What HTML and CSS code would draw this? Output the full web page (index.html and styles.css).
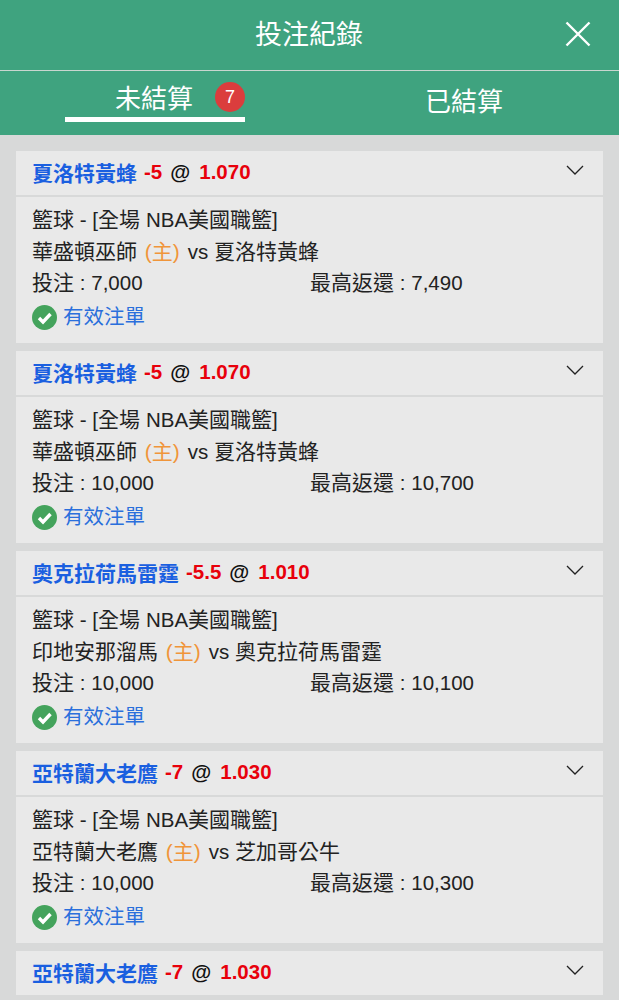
FILE: index.html
```html
<!DOCTYPE html>
<html lang="zh-Hant">
<head>
  <meta charset="UTF-8">
  <meta name="viewport" content="width=device-width, initial-scale=1.0">
  <title>投注紀錄</title>
  <link rel="stylesheet" href="styles.css">
</head>
<body>
  <div class="top-bar">
    <h1>投注紀錄</h1>
    <svg class="close-icon" width="26" height="26" viewBox="0 0 26 26"><path d="M1.5 1.5 L24.5 24.5 M24.5 1.5 L1.5 24.5" stroke="#fff" stroke-width="2.4" fill="none"/></svg>
  </div>
  <div class="tabs">
    <div class="tab active">
      <span class="tab-label">未結算</span>
      <span class="badge">7</span>
    </div>
    <div class="tab other"><span class="tab-label">已結算</span></div>
  </div>

  <div class="list">
    <div class="bet">
      <div class="bet-head">
        <div class="pick"><span class="team">夏洛特黃蜂</span><span class="line">-5</span><span class="at">@</span><span class="odds">1.070</span></div>
        <svg class="chevron" width="18" height="10" viewBox="0 0 18 10"><path d="M1 1 L9 9 L17 1" stroke="#222" stroke-width="1.3" fill="none"/></svg>
      </div>
      <div class="bet-body">
        <div class="row">籃球 <span class="latin">- [</span>全場 <span class="latin">NBA</span>美國職籃<span class="latin">]</span></div>
        <div class="row">華盛頓巫師 <span class="home">(主)</span> <span class="latin">vs</span> 夏洛特黃蜂</div>
        <div class="row amounts"><span class="stake">投注 <span class="latin">: 7,000</span></span><span>最高返還 <span class="latin">: 7,490</span></span></div>
        <div class="row status">
          <svg width="25" height="25" viewBox="0 0 25 25"><circle cx="12.5" cy="12.5" r="12.5" fill="#44a35c"/><path d="M7 13 L11 17 L18.5 9" stroke="#fff" stroke-width="3.4" fill="none"/></svg>
          <span>有效注單</span>
        </div>
      </div>
    </div>

    <div class="bet">
      <div class="bet-head">
        <div class="pick"><span class="team">夏洛特黃蜂</span><span class="line">-5</span><span class="at">@</span><span class="odds">1.070</span></div>
        <svg class="chevron" width="18" height="10" viewBox="0 0 18 10"><path d="M1 1 L9 9 L17 1" stroke="#222" stroke-width="1.3" fill="none"/></svg>
      </div>
      <div class="bet-body">
        <div class="row">籃球 <span class="latin">- [</span>全場 <span class="latin">NBA</span>美國職籃<span class="latin">]</span></div>
        <div class="row">華盛頓巫師 <span class="home">(主)</span> <span class="latin">vs</span> 夏洛特黃蜂</div>
        <div class="row amounts"><span class="stake">投注 <span class="latin">: 10,000</span></span><span>最高返還 <span class="latin">: 10,700</span></span></div>
        <div class="row status">
          <svg width="25" height="25" viewBox="0 0 25 25"><circle cx="12.5" cy="12.5" r="12.5" fill="#44a35c"/><path d="M7 13 L11 17 L18.5 9" stroke="#fff" stroke-width="3.4" fill="none"/></svg>
          <span>有效注單</span>
        </div>
      </div>
    </div>

    <div class="bet">
      <div class="bet-head">
        <div class="pick"><span class="team">奧克拉荷馬雷霆</span><span class="line">-5.5</span><span class="at">@</span><span class="odds">1.010</span></div>
        <svg class="chevron" width="18" height="10" viewBox="0 0 18 10"><path d="M1 1 L9 9 L17 1" stroke="#222" stroke-width="1.3" fill="none"/></svg>
      </div>
      <div class="bet-body">
        <div class="row">籃球 <span class="latin">- [</span>全場 <span class="latin">NBA</span>美國職籃<span class="latin">]</span></div>
        <div class="row">印地安那溜馬 <span class="home">(主)</span> <span class="latin">vs</span> 奧克拉荷馬雷霆</div>
        <div class="row amounts"><span class="stake">投注 <span class="latin">: 10,000</span></span><span>最高返還 <span class="latin">: 10,100</span></span></div>
        <div class="row status">
          <svg width="25" height="25" viewBox="0 0 25 25"><circle cx="12.5" cy="12.5" r="12.5" fill="#44a35c"/><path d="M7 13 L11 17 L18.5 9" stroke="#fff" stroke-width="3.4" fill="none"/></svg>
          <span>有效注單</span>
        </div>
      </div>
    </div>

    <div class="bet">
      <div class="bet-head">
        <div class="pick"><span class="team">亞特蘭大老鷹</span><span class="line">-7</span><span class="at">@</span><span class="odds">1.030</span></div>
        <svg class="chevron" width="18" height="10" viewBox="0 0 18 10"><path d="M1 1 L9 9 L17 1" stroke="#222" stroke-width="1.3" fill="none"/></svg>
      </div>
      <div class="bet-body">
        <div class="row">籃球 <span class="latin">- [</span>全場 <span class="latin">NBA</span>美國職籃<span class="latin">]</span></div>
        <div class="row">亞特蘭大老鷹 <span class="home">(主)</span> <span class="latin">vs</span> 芝加哥公牛</div>
        <div class="row amounts"><span class="stake">投注 <span class="latin">: 10,000</span></span><span>最高返還 <span class="latin">: 10,300</span></span></div>
        <div class="row status">
          <svg width="25" height="25" viewBox="0 0 25 25"><circle cx="12.5" cy="12.5" r="12.5" fill="#44a35c"/><path d="M7 13 L11 17 L18.5 9" stroke="#fff" stroke-width="3.4" fill="none"/></svg>
          <span>有效注單</span>
        </div>
      </div>
    </div>

    <div class="bet">
      <div class="bet-head">
        <div class="pick"><span class="team">亞特蘭大老鷹</span><span class="line">-7</span><span class="at">@</span><span class="odds">1.030</span></div>
        <svg class="chevron" width="18" height="10" viewBox="0 0 18 10"><path d="M1 1 L9 9 L17 1" stroke="#222" stroke-width="1.3" fill="none"/></svg>
      </div>
    </div>
  </div>
</body>
</html>
```

FILE: styles.css
```css
* {
  box-sizing: border-box;
  margin: 0;
  padding: 0;
  font-family: "Liberation Sans", "Noto Sans CJK TC", sans-serif;
}

html, body {
  height: 1000px;
  overflow: hidden;
}

body {
  background-color: #d8d9d9;
  color: #222;
}

.top-bar {
  position: relative;
  height: 71px;
  display: flex;
  align-items: center;
  justify-content: center;
  padding-bottom: 5px;
  background-color: #3fa37f;
  border-bottom: 1px solid #c9d6d0;
}

.top-bar h1 {
  font-size: 27px;
  font-weight: 400;
  color: #fff;
  padding-right: 1px;
}

.close-icon {
  position: absolute;
  right: 28px;
  top: 21px;
}

.tabs {
  height: 64px;
  display: flex;
  background-color: #3fa37f;
  color: #fff;
}

.tab {
  display: flex;
  align-items: center;
  font-size: 26px;
}

.tab.active {
  width: 180px;
  height: 51px;
  margin-left: 65px;
  padding-left: 50px;
  padding-top: 4px;
  border-bottom: 5px solid #fff;
}

.tab.other {
  margin-left: 180px;
  padding-bottom: 7px;
  height: 64px;
}

.badge {
  flex-shrink: 0;
  width: 30px;
  height: 30px;
  margin-left: 22px;
  margin-top: 2px;
  border-radius: 50%;
  background-color: #db3d3d;
  color: #fff;
  font-size: 18px;
  line-height: 30px;
  text-align: center;
}

.list {
  padding: 16px 16px 0;
  display: flex;
  flex-direction: column;
  gap: 8px;
}

.bet {
  background-color: #e9e9e9;
}

.bet-head {
  height: 44px;
  display: flex;
  align-items: center;
  justify-content: space-between;
  padding: 0 19px 3px 16px;
}

.pick {
  display: flex;
  align-items: center;
  font-size: 20.5px;
  font-weight: 700;
}

.team {
  font-size: 21px;
  color: #1a5fe0;
}

.line {
  margin-left: 7px;
  color: #e8000b;
}

.at {
  margin-left: 8px;
  color: #111;
}

.odds {
  margin-left: 9px;
  color: #e8000b;
}

.chevron {
  margin-bottom: 3px;
}

.bet-body {
  height: 146px;
  margin-top: 2px;
  padding: 7px 16px 0;
  font-size: 21px;
  box-shadow: 0 -2px 0 #d8d9d9;
}

.row {
  height: 32px;
  line-height: 32px;
  white-space: nowrap;
}

.latin {
  font-size: 20.5px;
}

.home {
  margin: 0 2px;
  color: #f0953a;
}

.amounts {
  display: flex;
  line-height: 30px;
}

.stake {
  width: 278px;
}

.status {
  display: flex;
  align-items: center;
  gap: 6px;
  height: 34px;
  font-size: 20.5px;
  color: #2a6fdc;
}
```
